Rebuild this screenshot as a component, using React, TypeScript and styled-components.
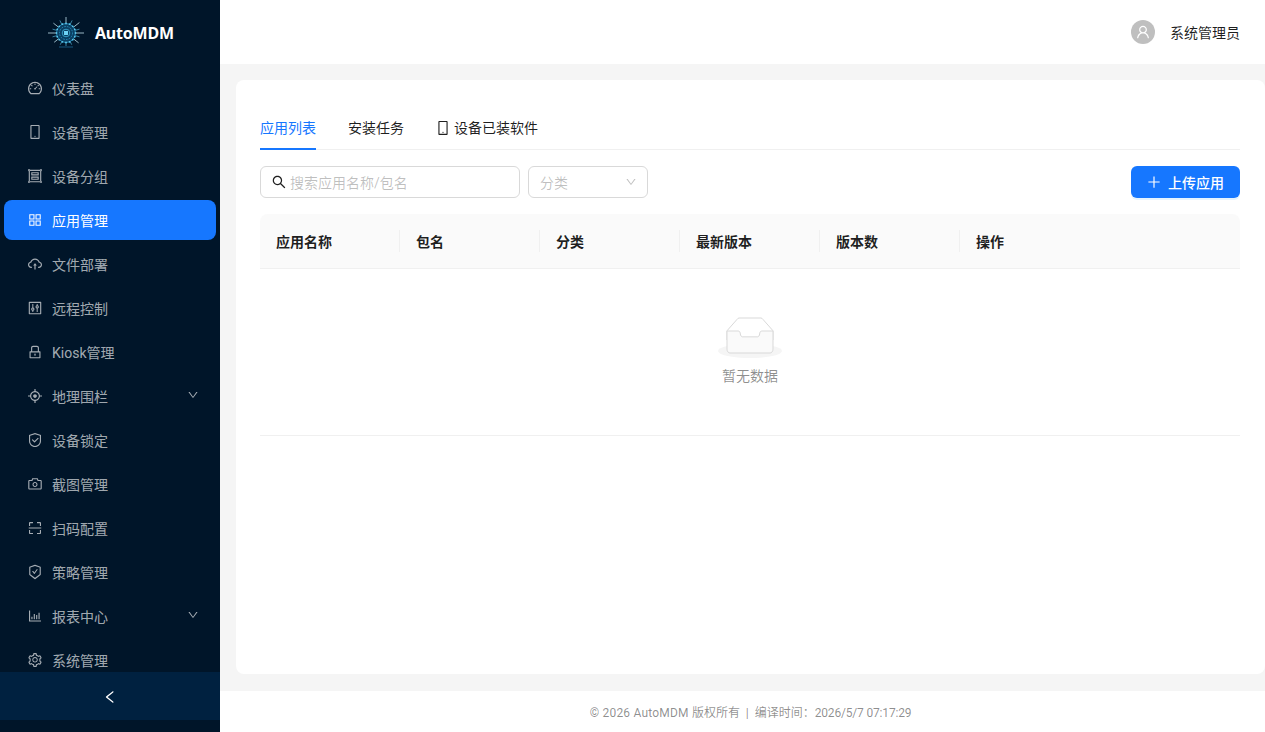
import React from 'react';
import styled, { createGlobalStyle } from 'styled-components';
import {
  AiOutlineAim,
  AiOutlineAppstore,
  AiOutlineBarChart,
  AiOutlineCamera,
  AiOutlineCloudUpload,
  AiOutlineControl,
  AiOutlineDashboard,
  AiOutlineDown,
  AiOutlineGroup,
  AiOutlineLeft,
  AiOutlineLock,
  AiOutlineMobile,
  AiOutlinePlus,
  AiOutlineSafety,
  AiOutlineSafetyCertificate,
  AiOutlineScan,
  AiOutlineSearch,
  AiOutlineSetting,
  AiOutlineUser,
} from 'react-icons/ai';

const GlobalStyle = createGlobalStyle`
  html, body {
    margin: 0;
    height: 100%;
    overflow: hidden;
  }
  body {
    font-family: "Roboto", "Noto Sans CJK SC", sans-serif;
    font-size: 14px;
    color: rgba(0, 0, 0, 0.88);
  }
  * {
    box-sizing: border-box;
  }
`;

const Layout = styled.div`
  display: flex;
  width: 1265px;
  height: 732px;
  overflow: hidden;
`;

const Sidebar = styled.aside`
  flex: 0 0 220px;
  display: flex;
  flex-direction: column;
  height: 732px;
  padding-bottom: 12px;
  background: #001529;
`;

const LogoRow = styled.div`
  flex: 0 0 64px;
  display: flex;
  align-items: center;
  padding: 2px 0 0 47px;
  gap: 10px;
`;

const LogoText = styled.span`
  color: #fff;
  font-family: "Noto Sans", sans-serif;
  font-size: 16px;
  font-weight: 700;
  letter-spacing: -0.2px;
`;

const Menu = styled.nav`
  flex: 1;
  min-height: 0;
  overflow: hidden;
  padding-top: 4px;
`;

const MenuItem = styled.div<{ $active?: boolean }>`
  display: flex;
  align-items: center;
  height: 40px;
  margin: 0 4px 4px;
  padding: 0 17px 0 23px;
  border-radius: 8px;
  background: ${p => (p.$active ? '#1677ff' : 'transparent')};
  color: ${p => (p.$active ? '#fff' : 'rgba(255, 255, 255, 0.65)')};

  > svg:first-child {
    font-size: 16px;
    margin-right: 9px;
  }
`;

const MenuLabel = styled.span`
  flex: 1;
`;

const Caret = styled(AiOutlineDown)`
  font-size: 12px;
  margin-top: -3px;
`;

const CollapseBar = styled.div`
  flex: 0 0 48px;
  display: flex;
  align-items: center;
  justify-content: center;
  padding-top: 2px;
  background: #002140;
  color: #fff;
  font-size: 16px;
`;

const Main = styled.div`
  flex: 1;
  min-width: 0;
  display: flex;
  flex-direction: column;
  background: #f5f5f5;
`;

const Header = styled.header`
  flex: 0 0 64px;
  display: flex;
  align-items: center;
  justify-content: flex-end;
  padding-right: 25px;
  background: #fff;
`;

const Avatar = styled.span`
  display: flex;
  align-items: center;
  justify-content: center;
  width: 24px;
  height: 24px;
  margin-right: 15px;
  border-radius: 50%;
  background: #bfbfbf;
  color: #fff;
  font-size: 16px;
`;

const Content = styled.main`
  flex: 1;
  padding: 16px 0 17px 16px;
`;

const Card = styled.section`
  height: 594px;
  padding: 24px 25px 24px 24px;
  border-radius: 8px;
  background: #fff;
`;

const Tabs = styled.div`
  display: flex;
  gap: 32px;
  margin-bottom: 16px;
  border-bottom: 1px solid #f0f0f0;
`;

const Tab = styled.div<{ $active?: boolean }>`
  position: relative;
  display: flex;
  align-items: center;
  height: 46px;
  margin-bottom: -1px;
  padding-top: 2px;
  color: ${p => (p.$active ? '#1677ff' : 'rgba(0, 0, 0, 0.88)')};
  line-height: 22px;

  &::after {
    content: '';
    position: absolute;
    left: 0;
    right: 0;
    bottom: 0;
    height: 2px;
    background: ${p => (p.$active ? '#1677ff' : 'transparent')};
  }

  > svg {
    font-size: 16px;
    margin: 0 3px 0 -1px;
  }
`;

const Toolbar = styled.div`
  display: flex;
  gap: 8px;
  margin-bottom: 16px;
`;

const SearchBox = styled.div`
  display: flex;
  align-items: center;
  width: 260px;
  height: 32px;
  padding: 0 11px;
  border: 1px solid #d9d9d9;
  border-radius: 6px;
  color: rgba(0, 0, 0, 0.88);

  > svg {
    font-size: 16px;
    margin: 0 3px 0 -1px;
  }
`;

const Placeholder = styled.span`
  color: rgba(0, 0, 0, 0.25);
`;

const SelectBox = styled.div`
  display: flex;
  align-items: center;
  justify-content: space-between;
  width: 120px;
  height: 32px;
  padding: 0 10px 0 11px;
  border: 1px solid #d9d9d9;
  border-radius: 6px;
  color: rgba(0, 0, 0, 0.25);

  > svg {
    font-size: 12px;
  }
`;

const UploadButton = styled.button`
  display: flex;
  align-items: center;
  width: 109px;
  height: 32px;
  margin-left: auto;
  padding: 0 0 0 15px;
  border: none;
  border-radius: 6px;
  background: #1677ff;
  color: #fff;
  font: inherit;
  font-weight: 500;
  box-shadow: 0 2px 0 rgba(5, 145, 255, 0.1);

  > svg {
    font-size: 16px;
    margin-right: 6px;
  }
`;

const TableHead = styled.div`
  display: grid;
  grid-template-columns: repeat(6, 140px) 1fr;
  height: 55px;
  border-bottom: 1px solid #f0f0f0;
  border-radius: 8px 8px 0 0;
  background: #fafafa;
  font-weight: 600;
`;

const HeadCell = styled.div`
  position: relative;
  display: flex;
  align-items: center;
  padding: 0 16px;

  &:not(:nth-last-child(-n + 2))::after {
    content: '';
    position: absolute;
    top: 16px;
    right: 0;
    width: 1px;
    height: 22px;
    background: #f0f0f0;
  }
`;

const EmptyRow = styled.div`
  display: flex;
  flex-direction: column;
  align-items: center;
  height: 167px;
  padding-top: 48px;
  border-bottom: 1px solid #f0f0f0;
  color: rgba(0, 0, 0, 0.45);
`;

const EmptyLabel = styled.div`
  margin-top: 7px;
  line-height: 22px;
`;

const Footer = styled.footer`
  flex: 0 0 41px;
  display: flex;
  align-items: center;
  justify-content: center;
  padding: 0 0 1px 16px;
  background: #fff;
  color: rgba(0, 0, 0, 0.45);
  font-size: 12px;
`;

const FooterText = styled.div`
  white-space: pre;
`;

const Tracked = styled.span<{ $tracking: string }>`
  letter-spacing: ${p => p.$tracking};
`;

const menuItems = [
  { label: '仪表盘', icon: AiOutlineDashboard },
  { label: '设备管理', icon: AiOutlineMobile },
  { label: '设备分组', icon: AiOutlineGroup },
  { label: '应用管理', icon: AiOutlineAppstore, active: true },
  { label: '文件部署', icon: AiOutlineCloudUpload },
  { label: '远程控制', icon: AiOutlineControl },
  { label: 'Kiosk管理', icon: AiOutlineLock },
  { label: '地理围栏', icon: AiOutlineAim, caret: true },
  { label: '设备锁定', icon: AiOutlineSafety },
  { label: '截图管理', icon: AiOutlineCamera },
  { label: '扫码配置', icon: AiOutlineScan },
  { label: '策略管理', icon: AiOutlineSafetyCertificate },
  { label: '报表中心', icon: AiOutlineBarChart, caret: true },
  { label: '系统管理', icon: AiOutlineSetting },
];

const columns = ['应用名称', '包名', '分类', '最新版本', '版本数', '操作', ''];

const Logo = () => {
  const cx = 19;
  const cy = 16;
  const rays = [
    [0, 18],
    [180, 18],
    [90, 14],
    [270, 16],
    [38, 16],
    [142, 15],
    [218, 16],
    [322, 17],
    [64, 13],
    [116, 13],
    [244, 14],
    [296, 14],
    [16, 14],
    [164, 14],
    [196, 14],
    [344, 14],
  ];
  const hub = [];
  for (let i = 0; i < 16; i++) {
    const a = (i * Math.PI) / 8;
    hub.push(
      <circle
        key={i}
        cx={cx + Math.cos(a) * 9.5}
        cy={cy + Math.sin(a) * 9.5}
        r="0.9"
        fill="#5cc6ea"
      />
    );
  }
  return (
    <svg width="38" height="32" viewBox="0 0 38 32" fill="none">
      {rays.map(([deg, len], i) => {
        const a = (deg * Math.PI) / 180;
        return (
          <line
            key={i}
            x1={cx + Math.cos(a) * 7}
            y1={cy + Math.sin(a) * 7}
            x2={cx + Math.cos(a) * len}
            y2={cy + Math.sin(a) * len}
            stroke={len > 14 ? '#a9c9d6' : '#3f8fb0'}
            strokeWidth="0.9"
          />
        );
      })}
      <circle cx={cx} cy={cy} r="10" fill="#0a3f63" />
      <circle cx={cx} cy={cy} r="9.5" stroke="#2a9fd0" strokeWidth="0.7" />
      <circle cx={cx} cy={cy} r="6.5" stroke="#2f9cc9" strokeWidth="0.8" strokeDasharray="1.6 1.2" />
      <circle cx={cx} cy={cy} r="3.8" stroke="#41b4dd" strokeWidth="0.8" />
      {hub}
      <rect x={cx - 2} y={cy - 2} width="4" height="4" fill="#6fd3f5" />
      <rect x="12" y="29" width="14" height="2" fill="#0b3553" />
    </svg>
  );
};

const EmptyIcon = () => (
  <svg width="64" height="41" viewBox="0 0 64 41">
    <g transform="translate(0 1)" fill="none" fillRule="evenodd">
      <ellipse fill="#f5f5f5" cx="32" cy="33" rx="32" ry="7" />
      <g fillRule="nonzero" stroke="#d9d9d9">
        <path d="M55 12.76L44.854 1.258C44.367.474 43.656 0 42.907 0H21.093c-.749 0-1.46.474-1.947 1.257L9 12.761V22h46v-9.24z" />
        <path
          d="M41.613 15.931c0-1.605.994-2.93 2.227-2.931H55v18.137C55 33.26 53.68 35 52.05 35h-40.1C10.32 35 9 33.259 9 31.137V13h11.16c1.233 0 2.227 1.323 2.227 2.928v.022c0 1.605 1.005 2.901 2.237 2.901h14.752c1.232 0 2.237-1.308 2.237-2.913v-.007z"
          fill="#fafafa"
        />
      </g>
    </g>
  </svg>
);

const App: React.FC = () => {
  return (
    <>
      <GlobalStyle />
      <Layout>
        <Sidebar>
          <LogoRow>
            <Logo />
            <LogoText>AutoMDM</LogoText>
          </LogoRow>
          <Menu>
            {menuItems.map(item => (
              <MenuItem key={item.label} $active={item.active}>
                <item.icon />
                <MenuLabel>{item.label}</MenuLabel>
                {item.caret && <Caret />}
              </MenuItem>
            ))}
          </Menu>
          <CollapseBar>
            <AiOutlineLeft />
          </CollapseBar>
        </Sidebar>
        <Main>
          <Header>
            <Avatar>
              <AiOutlineUser />
            </Avatar>
            <span>系统管理员</span>
          </Header>
          <Content>
            <Card>
              <Tabs>
                <Tab $active>应用列表</Tab>
                <Tab>安装任务</Tab>
                <Tab>
                  <AiOutlineMobile />
                  设备已装软件
                </Tab>
              </Tabs>
              <Toolbar>
                <SearchBox>
                  <AiOutlineSearch />
                  <Placeholder>搜索应用名称/包名</Placeholder>
                </SearchBox>
                <SelectBox>
                  分类
                  <AiOutlineDown />
                </SelectBox>
                <UploadButton>
                  <AiOutlinePlus />
                  上传应用
                </UploadButton>
              </Toolbar>
              <TableHead>
                {columns.map((c, i) => (
                  <HeadCell key={i}>{c}</HeadCell>
                ))}
              </TableHead>
              <EmptyRow>
                <EmptyIcon />
                <EmptyLabel>暂无数据</EmptyLabel>
              </EmptyRow>
            </Card>
          </Content>
          <Footer>
            <FooterText>
              <Tracked $tracking="0.2px">© 2026 AutoMDM </Tracked>
              版权所有  |  编译时间：
              <Tracked $tracking="-0.18px">2026/5/7 07:17:29</Tracked>
            </FooterText>
          </Footer>
        </Main>
      </Layout>
    </>
  );
};

export default App;
